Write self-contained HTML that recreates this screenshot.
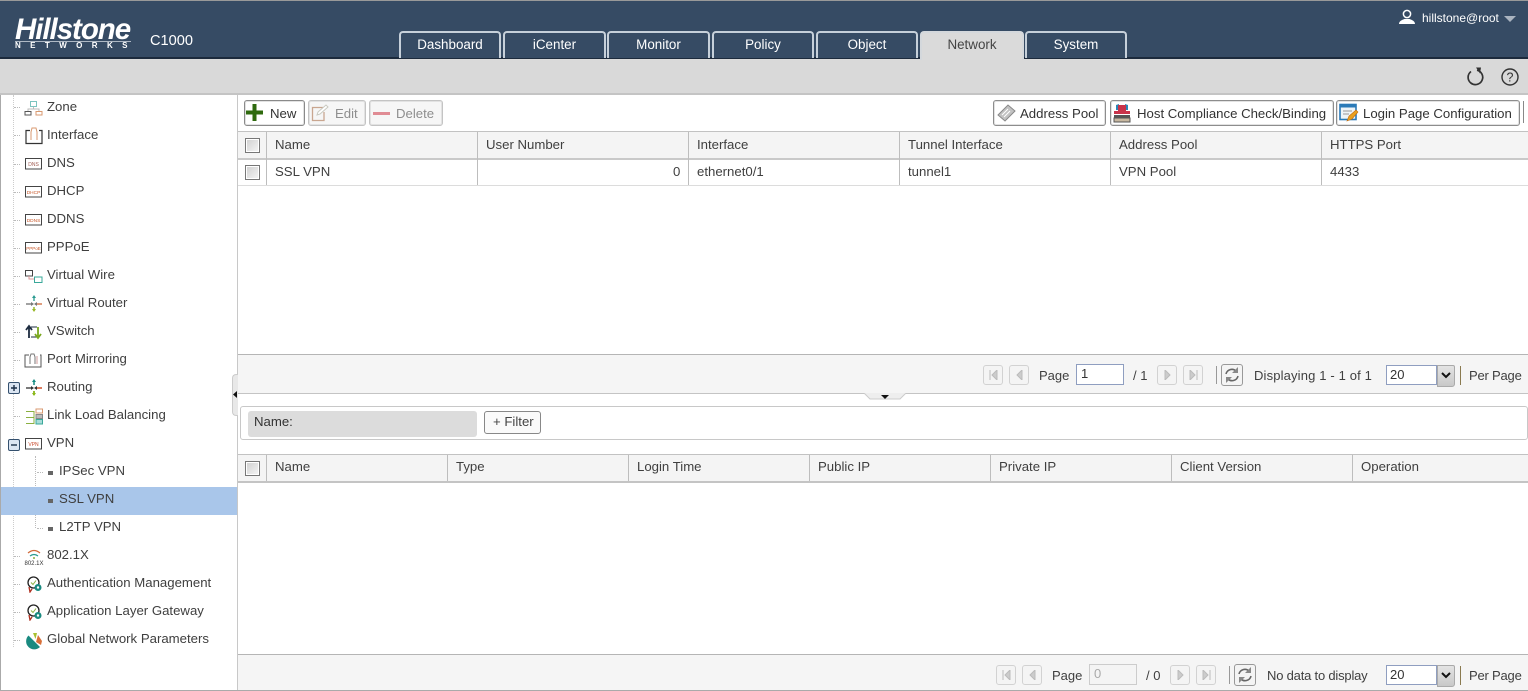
<!DOCTYPE html>
<html><head><meta charset="utf-8"><style>
html,body{margin:0;padding:0;background:#fff}
#p{position:relative;width:1528px;height:691px;overflow:hidden;background:#fff;font:13.2px/18px "Liberation Sans",sans-serif;color:#3f3f3f}
#p div,#p span,#p svg{position:absolute;white-space:nowrap}
.b{background:#fff;border:1px solid #8d8d8d;border-radius:3px;box-sizing:border-box;height:26px;top:100px;box-shadow:inset 0 0 0 1px #e2e2e2}
.dis{border-color:#c4c4c4;color:#8e8e8e;background:#f6f6f6}
.tab{top:31px;height:27px;box-sizing:border-box;border:2px solid #c6d0da;border-bottom:0;border-radius:4px 4px 0 0;background:#364b64;color:#fff;text-align:center;font-size:13.4px;line-height:24px}
.t{left:47px}.s{left:59px}
.th{background:#f4f4f4}
.sep{width:1px;background:#bdbdbd}
.cb{width:13px;height:13px;border:1px solid #777;background:linear-gradient(135deg,#cfcfcf,#f6f6f6);box-shadow:inset 0 0 0 1px #fff;left:245px}
.pg{width:20px;height:20px;box-sizing:border-box;border:1px solid #d2d2d2;border-radius:3px;background:#f4f4f4}
.dv{width:1px;height:18px;background:#999}
.dash{width:6px;height:0;border-top:1px dotted #bbb;left:14px}
</style></head><body><div id="p">

<!-- header -->
<div style="left:0;top:0;width:1528px;height:1px;background:#999"></div>
<div style="left:0;top:1px;width:1528px;height:56px;background:#364b64"></div>
<div style="left:0;top:57px;width:1528px;height:2px;background:#1c2a3c"></div>
<div style="left:0;top:59px;width:1528px;height:34px;background:#d9d9d9"></div>
<div style="left:0;top:93px;width:1528px;height:2px;background:#c4c4c4"></div>

<div style="left:15px;top:13px;font:italic bold 29.5px/34px 'Liberation Sans',sans-serif;color:#fff;letter-spacing:-1.050px">Hillstone</div>
<div style="left:15px;top:41px;width:116px;height:1px;background:#aeb8c4"></div>
<div style="left:15px;top:41px;font:bold 8px/10px 'Liberation Sans',sans-serif;color:#fff;letter-spacing:9.4px">NETWORKS</div>
<div style="left:150px;top:32px;font-size:14.6px;color:#fff">C1000</div>

<div class="tab" style="left:399px;width:102px">Dashboard</div>
<div class="tab" style="left:503px;width:103px">iCenter</div>
<div class="tab" style="left:607px;width:103px">Monitor</div>
<div class="tab" style="left:712px;width:102px">Policy</div>
<div class="tab" style="left:816px;width:102px">Object</div>
<div class="tab" style="left:920px;width:104px;background:#dadada;color:#444;border-color:#d4d8dc;height:29px">Network</div>
<div class="tab" style="left:1025px;width:102px">System</div>

<svg style="left:1398px;top:9px" width="18" height="16" viewBox="0 0 18 16"><circle cx="9" cy="5" r="3.6" fill="none" stroke="#fff" stroke-width="1.5"/><path d="M1 15c0-3 3-4 5.500-5h5c2.500 1 5.500 2 5.500 5z" fill="#fff"/></svg>
<div style="left:1422px;top:9px;font-size:12px;color:#fff">hillstone@root</div>
<svg style="left:1504px;top:16px" width="12" height="6"><path d="M0 0h12L6 6z" fill="#aab4c0"/></svg>

<svg style="left:1466px;top:67px" width="20" height="20" viewBox="0 0 20 20"><path d="M11 3.200A7.300 7.300 0 1 1 5 4.500" fill="none" stroke="#333" stroke-width="1.700"/><path d="M10 0.500l5 0-1 6z" fill="#333"/></svg>
<svg style="left:1501px;top:68px" width="18" height="18" viewBox="0 0 18 18"><circle cx="9" cy="9" r="8" fill="none" stroke="#333" stroke-width="1.400"/><text x="9" y="13.500" font-family="Liberation Sans" font-size="12.500" text-anchor="middle" fill="#333">?</text></svg>

<!-- sidebar -->
<div style="left:0;top:95px;width:1px;height:596px;background:#aaa"></div>
<div style="left:237px;top:95px;width:1px;height:596px;background:#c8c8c8"></div>
<div style="left:0;top:690px;width:1528px;height:1px;background:#aaa"></div>
<div style="left:13px;top:95px;height:552px;width:0;border-left:1px dotted #ccc"></div>
<div style="left:35px;top:456px;height:72px;width:0;border-left:1px dotted #bbb"></div>
<div style="left:1px;top:487px;width:236px;height:28px;background:#a9c6ea"></div>

<div class="dash" style="top:107px"></div><div class="dash" style="top:135px"></div><div class="dash" style="top:164px"></div><div class="dash" style="top:192px"></div><div class="dash" style="top:220px"></div><div class="dash" style="top:248px"></div><div class="dash" style="top:276px"></div><div class="dash" style="top:304px"></div><div class="dash" style="top:332px"></div><div class="dash" style="top:360px"></div><div class="dash" style="top:416px"></div><div class="dash" style="top:556px"></div><div class="dash" style="top:584px"></div><div class="dash" style="top:612px"></div><div class="dash" style="top:640px"></div>
<div style="left:37px;top:472px;width:6px;border-top:1px dotted #bbb"></div><div style="left:37px;top:528px;width:6px;border-top:1px dotted #bbb"></div>

<div class="t" style="top:98px">Zone</div>
<div class="t" style="top:126px">Interface</div>
<div class="t" style="top:154px">DNS</div>
<div class="t" style="top:182px">DHCP</div>
<div class="t" style="top:210px">DDNS</div>
<div class="t" style="top:238px">PPPoE</div>
<div class="t" style="top:266px">Virtual Wire</div>
<div class="t" style="top:294px">Virtual Router</div>
<div class="t" style="top:322px">VSwitch</div>
<div class="t" style="top:350px">Port Mirroring</div>
<div class="t" style="top:378px">Routing</div>
<div class="t" style="top:406px">Link Load Balancing</div>
<div class="t" style="top:434px">VPN</div>
<div class="s" style="top:462px">IPSec VPN</div>
<div class="s" style="top:490px">SSL VPN</div>
<div class="s" style="top:518px">L2TP VPN</div>
<div class="t" style="top:546px">802.1X</div>
<div class="t" style="top:574px">Authentication Management</div>
<div class="t" style="top:602px">Application Layer Gateway</div>
<div class="t" style="top:630px">Global Network Parameters</div>

<div style="left:48px;top:471px;width:5px;height:4px;background:#666"></div>
<div style="left:48px;top:499px;width:5px;height:4px;background:#666"></div>
<div style="left:48px;top:527px;width:5px;height:4px;background:#666"></div>

<!-- tree icons -->
<svg style="left:24px;top:100px" width="20" height="16" viewBox="0 0 20 16"><rect x="6.500" y="1.500" width="6" height="5" fill="none" stroke="#7cc4c0"/><path d="M9.500 7v2M4 11V9h11v2" fill="none" stroke="#bbb"/><rect x="1" y="11.500" width="6" height="3.500" fill="none" stroke="#555"/><rect x="12" y="11.500" width="6" height="3.500" fill="none" stroke="#d99a70"/></svg>
<svg style="left:24px;top:126px" width="20" height="19" viewBox="0 0 20 19"><path d="M6 4.500H2v13h16v-13h-3" fill="none" stroke="#333" stroke-width="1.200"/><path d="M7 14V6l1-4h4l1 4v8" fill="none" stroke="#d99a70"/></svg>
<svg style="left:25px;top:158px" width="17" height="12"><rect x=".5" y=".5" width="16" height="10.500" fill="#fff" stroke="#444"/><text x="8.500" y="8" font-family="Liberation Sans" font-size="5" text-anchor="middle" fill="#a05a50">DNS</text></svg>
<svg style="left:25px;top:186px" width="17" height="12"><rect x=".5" y=".5" width="16" height="10.500" fill="#fff" stroke="#444"/><text x="8.500" y="8" font-family="Liberation Sans" font-size="4.800" text-anchor="middle" fill="#c8582a">DHCP</text></svg>
<svg style="left:25px;top:214px" width="17" height="12"><rect x=".5" y=".5" width="16" height="10.500" fill="#fff" stroke="#444"/><text x="8.500" y="8" font-family="Liberation Sans" font-size="4.800" text-anchor="middle" fill="#c8582a">DDNS</text></svg>
<svg style="left:25px;top:242px" width="17" height="12"><rect x=".5" y=".5" width="16" height="10.500" fill="#fff" stroke="#444"/><text x="8.500" y="8" font-family="Liberation Sans" font-size="4.500" text-anchor="middle" fill="#c8582a">PPPoE</text></svg>
<svg style="left:25px;top:270px" width="18" height="14"><rect x=".5" y=".5" width="7" height="5.500" fill="#fff" stroke="#444"/><rect x="9.500" y="7" width="7.500" height="5.500" fill="#fff" stroke="#3aa89a"/><path d="M4 6v3h5" fill="none" stroke="#d99"/></svg>
<svg style="left:25px;top:295px" width="18" height="18" viewBox="0 0 18 18"><path d="M1 9h5" stroke="#444"/><path d="M12 9h5" stroke="#d06a3a" stroke-width="1.300"/><path d="M9 2v4" stroke="#2a9a90" stroke-width="1.300"/><path d="M9 12v4" stroke="#9ab82a" stroke-width="1.500"/><path d="M6 7l3 2-3 2zM12 7L9 9l3 2z" fill="#777"/><path d="M9 0l2 3H7z" fill="#2a9a90"/><path d="M9 17l-2-3h4z" fill="#9ab82a"/></svg>
<svg style="left:25px;top:324px" width="18" height="16" viewBox="0 0 18 16"><path d="M4 14V3M1 6l3-4 3 4" fill="none" stroke="#1d2c40" stroke-width="1.800"/><path d="M6 3h6M6 13h6" stroke="#1d2c40"/><path d="M13 3v10M10 10l3 4 3-4" fill="none" stroke="#7aa81e" stroke-width="1.800"/></svg>
<svg style="left:24px;top:352px" width="18" height="16" viewBox="0 0 18 16"><path d="M5 3H1v12h16V3h-1" fill="none" stroke="#555"/><path d="M6 12V5l1-3h3l1 3v7" fill="none" stroke="#777"/><path d="M13 4v8" stroke="#c99"/></svg>
<svg style="left:25px;top:379px" width="18" height="18" viewBox="0 0 18 18"><path d="M1 9h5" stroke="#222" stroke-width="1.200"/><path d="M12 9h5" stroke="#d0502a" stroke-width="1.500"/><path d="M9 2v4" stroke="#148a80" stroke-width="1.500"/><path d="M9 12v4" stroke="#8ab81a" stroke-width="1.800"/><path d="M6 7l3 2-3 2zM12 7L9 9l3 2z" fill="#333"/><path d="M9 0l2 3H7z" fill="#148a80"/><path d="M9 17l-2-3h4z" fill="#8ab81a"/></svg>
<svg style="left:25px;top:408px" width="18" height="17" viewBox="0 0 18 17"><path d="M1 3.500h8v12H1M1 9.500h8" fill="none" stroke="#8ab040"/><rect x="11" y="1" width="6.500" height="4" fill="#fff" stroke="#d99a70"/><rect x="11" y="6.500" width="6.500" height="4" fill="#bbb" stroke="#888"/><rect x="11" y="11.500" width="6.500" height="4.500" fill="#a8dcd8" stroke="#3aa89a"/></svg>
<svg style="left:25px;top:438px" width="17" height="12"><rect x=".5" y=".5" width="16" height="10.500" fill="#fff" stroke="#444"/><text x="8.500" y="8" font-family="Liberation Sans" font-size="5" text-anchor="middle" fill="#c8482a">VPN</text></svg>
<svg style="left:8px;top:382px" width="12" height="12"><rect x=".5" y=".5" width="11" height="11" rx="1.500" fill="#dbe5f2" stroke="#34506e"/><path d="M3 6h6M6 3v6" stroke="#1b2f48" stroke-width="1.400"/></svg>
<svg style="left:8px;top:439px" width="12" height="12"><rect x=".5" y=".5" width="11" height="11" rx="1.500" fill="#dbe5f2" stroke="#34506e"/><path d="M3 6h6" stroke="#1b2f48" stroke-width="1.400"/></svg>
<svg style="left:24px;top:548px" width="20" height="18" viewBox="0 0 20 18"><path d="M4 5q6-5 12 0" fill="none" stroke="#d06a3a" stroke-width="1.200"/><path d="M6 8q4-3 8 0" fill="none" stroke="#2a9a90" stroke-width="1.200"/><circle cx="10" cy="10" r="1" fill="#8ab040"/><text x="10" y="17" font-family="Liberation Sans" font-size="6" text-anchor="middle" fill="#333">802.1X</text></svg>
<svg style="left:26px;top:576px" width="16" height="17" viewBox="0 0 16 17"><circle cx="7.500" cy="6.500" r="5.500" fill="#fff" stroke="#222" stroke-width="1.300"/><path d="M5 6.500l2 2 3-4" fill="none" stroke="#8ab040"/><circle cx="12" cy="11.500" r="3.500" fill="#1a8a80"/><circle cx="12" cy="11.500" r="1.200" fill="#fff"/><path d="M3 11l1 5 2-3" fill="none" stroke="#b03020" stroke-width="1.300"/></svg>
<svg style="left:26px;top:604px" width="16" height="17" viewBox="0 0 16 17"><circle cx="7.500" cy="6.500" r="5.500" fill="#fff" stroke="#222" stroke-width="1.300"/><path d="M5 6.500l2 2 3-4" fill="none" stroke="#8ab040"/><circle cx="12" cy="11.500" r="3.500" fill="#1a8a80"/><circle cx="12" cy="11.500" r="1.200" fill="#fff"/><path d="M3 11l1 5 2-3" fill="none" stroke="#b03020" stroke-width="1.300"/></svg>
<svg style="left:25px;top:632px" width="18" height="18" viewBox="0 0 18 18"><path d="M9 9L3.500 3.500A8 8 0 1 0 15 15z" fill="#1a8a80"/><path d="M8 1l4 0-1.500 6z" fill="#a8c030"/><path d="M13 3l4 6-1 4-5-3z" fill="#d8703a"/></svg>

<!-- collapse handle -->
<div style="left:232px;top:374px;width:5px;height:40px;background:#e8e8e8;border:1px solid #ccc;border-right:0;border-radius:4px 0 0 4px"></div>
<svg style="left:233px;top:391px" width="5" height="7"><path d="M4 0v7L0 3.500z" fill="#111"/></svg>

<!-- toolbar -->
<div class="b" style="left:244px;width:61px;border-color:#8a8a8a"><span style="left:25px;top:4px;color:#333">New</span></div>
<svg style="left:246px;top:104px" width="17" height="17"><path d="M8.500 0v17M0 8.500h17" stroke="#2f6a0e" stroke-width="4"/></svg>
<div class="b dis" style="left:308px;width:58px"><span style="left:26px;top:4px">Edit</span></div>
<svg style="left:311px;top:104px" width="18" height="18" viewBox="0 0 18 18"><path d="M12 3.500H1.500V16.500H13V8" fill="none" stroke="#c9a690" stroke-width="1.300"/><path d="M6 11l1-3 8-7 2 2-8 7z" fill="#fff" stroke="#c9c9c0"/></svg>
<div class="b dis" style="left:369px;width:74px"><span style="left:26px;top:4px">Delete</span></div>
<div style="left:373px;top:112px;width:17px;height:3px;background:#e08c94"></div>

<div class="b" style="left:993px;width:113px"><span style="left:26px;top:4px;color:#333">Address Pool</span></div>
<svg style="left:997px;top:104px" width="19" height="18" viewBox="0 0 19 18"><path d="M1 11L11 1l7 6-10 10z" fill="#c2c2c2" stroke="#888"/><path d="M5 11l6-6M7 13l6-6" stroke="#fff"/></svg>
<div class="b" style="left:1110px;width:224px"><span style="left:26px;top:4px;color:#333">Host Compliance Check/Binding</span></div>
<svg style="left:1113px;top:103px" width="18" height="20" viewBox="0 0 18 20"><path d="M3 2l3-1v6H3zM12 1l3 1v5h-3z" fill="#2a86b8"/><rect x="5" y="2" width="8" height="6" fill="#c8334a"/><rect x="1" y="8" width="16" height="3" fill="#c8334a"/><rect x="1" y="12" width="16" height="3" fill="#555"/><rect x="1" y="15" width="16" height="4" fill="#c8b8a0" stroke="#555"/></svg>
<div class="b" style="left:1336px;width:184px"><span style="left:26px;top:4px;color:#333">Login Page Configuration</span></div>
<svg style="left:1339px;top:103px" width="20" height="20" viewBox="0 0 20 20"><rect x="1" y="1.500" width="16" height="15" fill="#eef4f8" stroke="#2a7ab8" stroke-width="1.600"/><rect x="1" y="1.500" width="16" height="3" fill="#2a7ab8"/><path d="M4 8h9M4 11h6" stroke="#999"/><path d="M8 18l2-5 7-6 2 2-6 7z" fill="#e8a020" stroke="#c06a10" stroke-width=".6"/></svg>
<div style="left:1523px;top:101px;width:1px;height:22px;background:#888"></div>

<!-- grid 1 -->
<div style="left:238px;top:131px;width:1290px;height:1px;background:#c2c2c2"></div>
<div class="th" style="left:238px;top:132px;width:1290px;height:26px"></div>
<div style="left:238px;top:158px;width:1290px;height:2px;background:#c9c9c9"></div>
<div style="left:238px;top:185px;width:1290px;height:1px;background:#dcdcdc"></div>
<div class="sep" style="left:266px;top:132px;height:53px"></div>
<div class="sep" style="left:477px;top:132px;height:53px"></div>
<div class="sep" style="left:688px;top:132px;height:53px"></div>
<div class="sep" style="left:899px;top:132px;height:53px"></div>
<div class="sep" style="left:1110px;top:132px;height:53px"></div>
<div class="sep" style="left:1321px;top:132px;height:53px"></div>
<div class="cb" style="top:138px"></div><div class="cb" style="top:165px"></div>
<div style="left:275px;top:136px">Name</div>
<div style="left:486px;top:136px">User Number</div>
<div style="left:697px;top:136px">Interface</div>
<div style="left:908px;top:136px">Tunnel Interface</div>
<div style="left:1119px;top:136px">Address Pool</div>
<div style="left:1330px;top:136px">HTTPS Port</div>
<div style="left:275px;top:163px">SSL VPN</div>
<div style="left:673px;top:163px">0</div>
<div style="left:697px;top:163px">ethernet0/1</div>
<div style="left:908px;top:163px">tunnel1</div>
<div style="left:1119px;top:163px">VPN Pool</div>
<div style="left:1330px;top:163px">4433</div>

<!-- pager 1 -->
<div style="left:238px;top:354px;width:1290px;height:1px;background:#b5b5b5"></div>
<div style="left:238px;top:355px;width:1290px;height:38px;background:#f5f5f5"></div>
<div style="left:238px;top:393px;width:1290px;height:1px;background:#c4c4c4"></div>
<div class="pg" style="left:983px;top:365px"></div><div class="pg" style="left:1009px;top:365px"></div>
<svg style="left:989px;top:370px" width="9" height="10"><path d="M1 0v10M8 0v10L3 5z" stroke="#bbb" fill="#ccc"/></svg>
<svg style="left:1016px;top:370px" width="7" height="10"><path d="M6 0v10L1 5z" fill="#ccc" stroke="#bbb"/></svg>
<div style="left:1039px;top:367px;font-size:13px">Page</div>
<div style="left:1076px;top:364px;width:48px;height:21px;box-sizing:border-box;border:1px solid #8f9ec0;background:#fff;padding-left:4px;line-height:17px;font-size:13px;color:#333">1</div>
<div style="left:1133px;top:367px;font-size:13px">/ 1</div>
<div class="pg" style="left:1157px;top:365px"></div><div class="pg" style="left:1183px;top:365px"></div>
<svg style="left:1164px;top:370px" width="7" height="10"><path d="M1 0v10L6 5z" fill="#ccc" stroke="#bbb"/></svg>
<svg style="left:1189px;top:370px" width="9" height="10"><path d="M8 0v10M1 0v10L6 5z" stroke="#bbb" fill="#ccc"/></svg>
<div class="dv" style="left:1216px;top:366px"></div>
<div style="left:1221px;top:364px;width:22px;height:22px;box-sizing:border-box;border:1px solid #999;border-radius:3px;background:#f4f4f4"></div>
<svg style="left:1223px;top:366px" width="18" height="18" viewBox="0 0 18 18"><path d="M3 8a6 6 0 0 1 10-3M15 10a6 6 0 0 1-10 3" fill="none" stroke="#666" stroke-width="1.600"/><path d="M15 1v6h-6zM3 17v-6h6z" fill="#888"/></svg>
<div style="left:1254px;top:367px;font-size:13px;letter-spacing:.15px">Displaying 1 - 1 of 1</div>
<div style="left:1386px;top:365px;width:51px;height:20px;box-sizing:border-box;border:1px solid #8f9ec0;background:#fff;padding-left:3px;line-height:17px;font-size:13px;color:#333">20</div>
<div style="left:1437px;top:365px;width:18px;height:22px;box-sizing:border-box;border:1px solid #aaa;border-radius:0 2px 3px 0;background:linear-gradient(#e4e4e4,#c8c8c8)"></div>
<svg style="left:1441px;top:372px" width="10" height="7"><path d="M1 1l4 4 4-4" fill="none" stroke="#111" stroke-width="2"/></svg>
<div style="left:1460px;top:366px;width:1px;height:19px;background:#8a7a50"></div>
<div style="left:1469px;top:367px;font-size:13px;letter-spacing:-.2px">Per Page</div>

<!-- splitter -->
<svg style="left:864px;top:393px" width="42" height="8"><path d="M0 0l6 6h30l6-6" fill="#eee" stroke="#ccc"/><path d="M17 2h8l-4 4z" fill="#111"/></svg>

<!-- filter -->
<div style="left:240px;top:406px;width:1288px;height:34px;box-sizing:border-box;border:1px solid #c8c8c8;border-radius:3px"></div>
<div style="left:248px;top:411px;width:229px;height:26px;background:#dcdcdc;border-radius:3px"></div>
<div style="left:254px;top:413px;color:#333">Name:</div>
<div style="left:484px;top:411px;width:57px;height:23px;box-sizing:border-box;border:1px solid #888;border-radius:3px;background:#fafafa;padding-left:8px;line-height:20px;color:#444">+ Filter</div>

<!-- grid 2 -->
<div style="left:238px;top:454px;width:1290px;height:1px;background:#c2c2c2"></div>
<div class="th" style="left:238px;top:455px;width:1290px;height:26px"></div>
<div style="left:238px;top:481px;width:1290px;height:2px;background:#c4c4c4"></div>
<div class="sep" style="left:266px;top:455px;height:26px"></div>
<div class="sep" style="left:447px;top:455px;height:26px"></div>
<div class="sep" style="left:628px;top:455px;height:26px"></div>
<div class="sep" style="left:809px;top:455px;height:26px"></div>
<div class="sep" style="left:990px;top:455px;height:26px"></div>
<div class="sep" style="left:1171px;top:455px;height:26px"></div>
<div class="sep" style="left:1352px;top:455px;height:26px"></div>
<div class="cb" style="top:461px"></div>
<div style="left:275px;top:458px">Name</div>
<div style="left:456px;top:458px">Type</div>
<div style="left:637px;top:458px">Login Time</div>
<div style="left:818px;top:458px">Public IP</div>
<div style="left:999px;top:458px">Private IP</div>
<div style="left:1180px;top:458px">Client Version</div>
<div style="left:1361px;top:458px">Operation</div>

<!-- pager 2 -->
<div style="left:238px;top:654px;width:1290px;height:1px;background:#b5b5b5"></div>
<div style="left:238px;top:655px;width:1290px;height:35px;background:#f5f5f5"></div>
<div class="pg" style="left:996px;top:665px"></div><div class="pg" style="left:1022px;top:665px"></div>
<svg style="left:1002px;top:670px" width="9" height="10"><path d="M1 0v10M8 0v10L3 5z" stroke="#bbb" fill="#ccc"/></svg>
<svg style="left:1029px;top:670px" width="7" height="10"><path d="M6 0v10L1 5z" fill="#ccc" stroke="#bbb"/></svg>
<div style="left:1052px;top:667px;font-size:13px">Page</div>
<div style="left:1089px;top:664px;width:48px;height:21px;box-sizing:border-box;border:1px solid #ccc;background:#f4f4f4;padding-left:4px;line-height:17px;font-size:13px;color:#aaa">0</div>
<div style="left:1146px;top:667px;font-size:13px">/ 0</div>
<div class="pg" style="left:1170px;top:665px"></div><div class="pg" style="left:1196px;top:665px"></div>
<svg style="left:1177px;top:670px" width="7" height="10"><path d="M1 0v10L6 5z" fill="#ccc" stroke="#bbb"/></svg>
<svg style="left:1202px;top:670px" width="9" height="10"><path d="M8 0v10M1 0v10L6 5z" stroke="#bbb" fill="#ccc"/></svg>
<div class="dv" style="left:1229px;top:666px"></div>
<div style="left:1234px;top:664px;width:22px;height:22px;box-sizing:border-box;border:1px solid #999;border-radius:3px;background:#f4f4f4"></div>
<svg style="left:1236px;top:666px" width="18" height="18" viewBox="0 0 18 18"><path d="M3 8a6 6 0 0 1 10-3M15 10a6 6 0 0 1-10 3" fill="none" stroke="#666" stroke-width="1.600"/><path d="M15 1v6h-6zM3 17v-6h6z" fill="#888"/></svg>
<div style="left:1267px;top:667px;font-size:13px;letter-spacing:-.2px">No data to display</div>
<div style="left:1386px;top:665px;width:51px;height:20px;box-sizing:border-box;border:1px solid #8f9ec0;background:#fff;padding-left:3px;line-height:17px;font-size:13px;color:#333">20</div>
<div style="left:1437px;top:665px;width:18px;height:22px;box-sizing:border-box;border:1px solid #aaa;border-radius:0 2px 3px 0;background:linear-gradient(#e4e4e4,#c8c8c8)"></div>
<svg style="left:1441px;top:672px" width="10" height="7"><path d="M1 1l4 4 4-4" fill="none" stroke="#111" stroke-width="2"/></svg>
<div style="left:1460px;top:666px;width:1px;height:19px;background:#8a7a50"></div>
<div style="left:1469px;top:667px;font-size:13px;letter-spacing:-.2px">Per Page</div>

</div></body></html>
